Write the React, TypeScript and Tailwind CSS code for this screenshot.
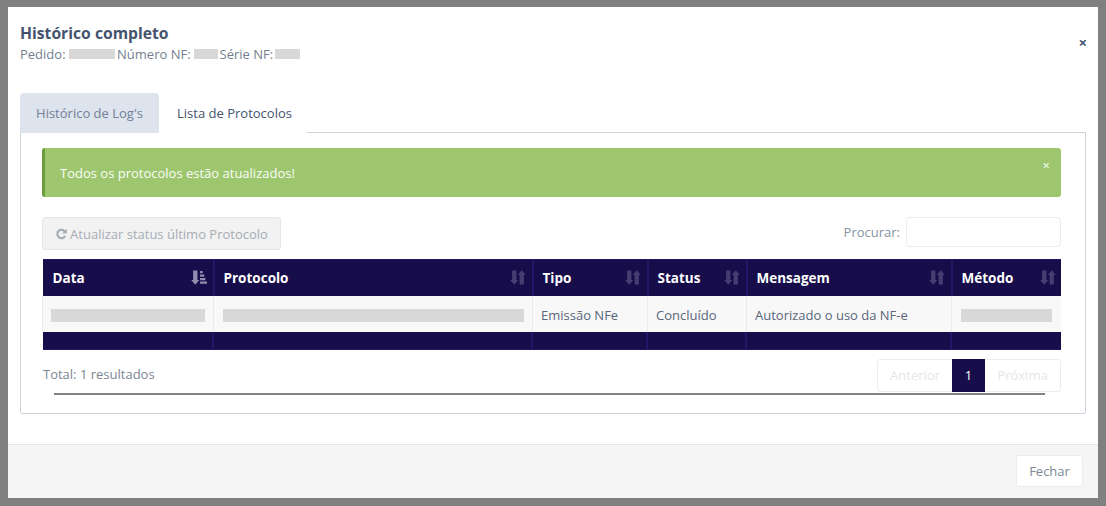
import React from "react";

function Blank({ w, extra }: { w: string; extra?: string }) {
  return <span className={`inline-block ${w} ${extra ?? ""} -mt-[2px] h-[13px] bg-[#d8d8d8] align-middle`} />;
}

function SortIcon() {
  return (
    <svg width="16" height="15" viewBox="0 0 15 15" preserveAspectRatio="none" className="shrink-0" fill="#443f70">
      <path d="M2 0.500h4v9.500h1.800L4 14.800 0.200 10H2z" />
      <path d="M9 14.500h4V5h1.800L11 0.200 7.200 5H9z" />
    </svg>
  );
}

function ActiveSortIcon() {
  return (
    <svg width="16" height="15" viewBox="0 0 15 15" preserveAspectRatio="none" className="shrink-0" fill="#918dae">
      <path d="M2 0.500h4v9.500h1.800L4 14.800 0.200 10H2z" />
      <path d="M8.500 1h2.500v2.200H8.500zM8.500 4.500h4v2.200h-4zM8.500 8h5v2.200h-5zM8.500 11.500h6.500v2.200H8.500z" />
    </svg>
  );
}

function Th({ w, label, active, pad }: { w: string; label: string; active?: boolean; pad?: string }) {
  return (
    <th className={`${w} h-[36px] border-x-2 border-y-0 border-[#221668] bg-[#170d4a] p-0 text-left text-[13.5px] font-bold text-white first:border-l-0`}>
      <div className={`flex items-center justify-between ${pad ?? "pl-[9px]"} pr-[6px]`}>
        <span>{label}</span>
        {active ? <ActiveSortIcon /> : <SortIcon />}
      </div>
    </th>
  );
}

function Td({ children }: { children: React.ReactNode }) {
  return <td className="h-[36px] border-x border-[#e9e9e9] bg-[#f8f8f8] px-[8px] pb-0 pt-[2px] text-[#59667a]">{children}</td>;
}

export default function App() {
  return (
    <div
      className="flex h-[506px] w-[1106px] overflow-hidden bg-[#808080] pb-[8px] pl-[8px] pr-[8px] pt-[7px] text-[13px] leading-[18px]"
      style={{ fontFamily: '"Open Sans", sans-serif' }}
    >
      <div className="flex h-[491px] w-[1090px] flex-col bg-white">
        <div className="flex h-[86px] items-start justify-between pl-[12px] pr-[11px] pt-[15px]">
          <div>
            <h4 className="text-[15.7px] leading-[22px] font-bold text-[#44546f]">Histórico completo</h4>
            <p className="mt-[1px] flex items-center text-[#737f8f]">
              <span>Pedido:</span>
              <span className="ml-[3px] mr-[2.500px] h-[10px] w-[46px] bg-[#d8d8d8]" />
              <span>Número NF:</span>
              <span className="ml-[3px] mr-[2px] h-[10px] w-[24px] bg-[#d8d8d8]" />
              <span>Série NF:</span>
              <span className="ml-[2px] h-[10px] w-[25px] bg-[#d8d8d8]" />
            </p>
          </div>
          <span className="mt-[11px] text-[15px] leading-[18px] font-bold text-[#44546f]">×</span>
        </div>

        <div className="px-[12px]">
          <div className="relative z-10 flex h-[40px] items-stretch">
            <div className="flex w-[139px] items-center justify-center rounded-t-[4px] bg-[#dde4ed] text-[#718096]">Histórico de Log's</div>
            <div className="flex w-[148px] items-center justify-center bg-white pl-[3px] text-[#44546f]">Lista de Protocolos</div>
          </div>
          <div className="-mt-px h-[282px] rounded-b-[2px] border border-[#ccd3dd] pl-[21px] pr-[21px] pt-[15px]">
            <div className="flex h-[49px] w-[1019px] items-center justify-between rounded-[3px] border-l-[3px] border-[#6d9a3c] bg-[#9dc66f] pl-[15px] pr-[11px] text-[#fbfdf8]">
              <span>Todos os protocolos estão atualizados!</span>
              <span className="-mt-[16px] text-[13px] font-bold text-[#dff0d0]">×</span>
            </div>

            <div className="mt-[20px] flex w-[1019px] items-start justify-between">
              <button className="flex h-[33px] w-[239px] items-center justify-center gap-[3px] rounded-[3px] border border-[#e6e6e6] bg-[#f2f2f2] text-[#a7adb5]">
                <svg width="12" height="12" viewBox="0 0 12 12" fill="none" className="shrink-0">
                  <path d="M10 3.600A4.200 4.200 0 1 0 10.200 8" stroke="#a7adb5" strokeWidth="2.200" />
                  <path d="M11.800 0.800v4.600H7.200z" fill="#a7adb5" />
                </svg>
                <span>Atualizar status último Protocolo</span>
              </button>
              <div className="flex items-center gap-[6px] text-[#8794a5]">
                <span>Procurar:</span>
                <div className="h-[30px] w-[155px] rounded-[3px] border border-[#ececec] bg-white" />
              </div>
            </div>

            <div className="mt-[9px] w-[1019px] overflow-hidden">
              <table className="w-[1020px] table-fixed border-collapse border-y border-[#221668]">
                <thead>
                  <tr>
                    <Th w="w-[171px]" label="Data" active pad="pl-[10px]" />
                    <Th w="w-[319px]" label="Protocolo" />
                    <Th w="w-[115px]" label="Tipo" />
                    <Th w="w-[99px]" label="Status" />
                    <Th w="w-[205px]" label="Mensagem" />
                    <Th w="w-[111px]" label="Método" />
                  </tr>
                </thead>
                <tbody>
                  <tr>
                    <Td><Blank w="w-[154px]" /></Td>
                    <Td><Blank w="w-[301px]" extra="ml-px" /></Td>
                    <Td>Emissão NFe</Td>
                    <Td>Concluído</Td>
                    <Td>Autorizado o uso da NF-e</Td>
                    <Td><Blank w="w-[91px]" extra="ml-px" /></Td>
                  </tr>
                  <tr>
                    <td colSpan={6} className="h-[17px] bg-[#170d4a] p-0">
                      <div className="grid h-[17px] grid-cols-[171px_319px_115px_99px_205px_111px]">
                        <div className="border-r-2 border-[#221668]" />
                        <div className="border-r-2 border-[#221668]" />
                        <div className="border-r-2 border-[#221668]" />
                        <div className="border-r-2 border-[#221668]" />
                        <div className="border-r-2 border-[#221668]" />
                        <div />
                      </div>
                    </td>
                  </tr>
                </tbody>
              </table>
            </div>

            <div className="mt-[9px] flex h-[34px] w-[1019px] items-start justify-between">
              <span className="pl-px pt-[6px] text-[#7b8795]">Total: 1 resultados</span>
              <div className="flex h-[33px] items-stretch rounded-[3px] border border-[#ececec] text-[#e4e7ea]">
                <span className="flex w-[74px] items-center justify-center">Anterior</span>
                <span className="-my-px flex w-[33px] items-center justify-center bg-[#170d4a] text-white">1</span>
                <span className="flex w-[75px] items-center justify-center">Próxima</span>
              </div>
            </div>
            <div className="ml-[12px] h-[2px] w-[991px] bg-[#85857f]" />
          </div>
        </div>

        <div className="mt-[30px] flex h-[54px] flex-1 items-center justify-end border-t border-[#e5e5e5] bg-[#f5f5f5] pb-[2px] pr-[15px]">
          <button className="flex h-[32px] w-[67px] items-center justify-center rounded-[3px] border border-[#ececec] bg-white text-[#7b8795]">Fechar</button>
        </div>
      </div>
    </div>
  );
}
